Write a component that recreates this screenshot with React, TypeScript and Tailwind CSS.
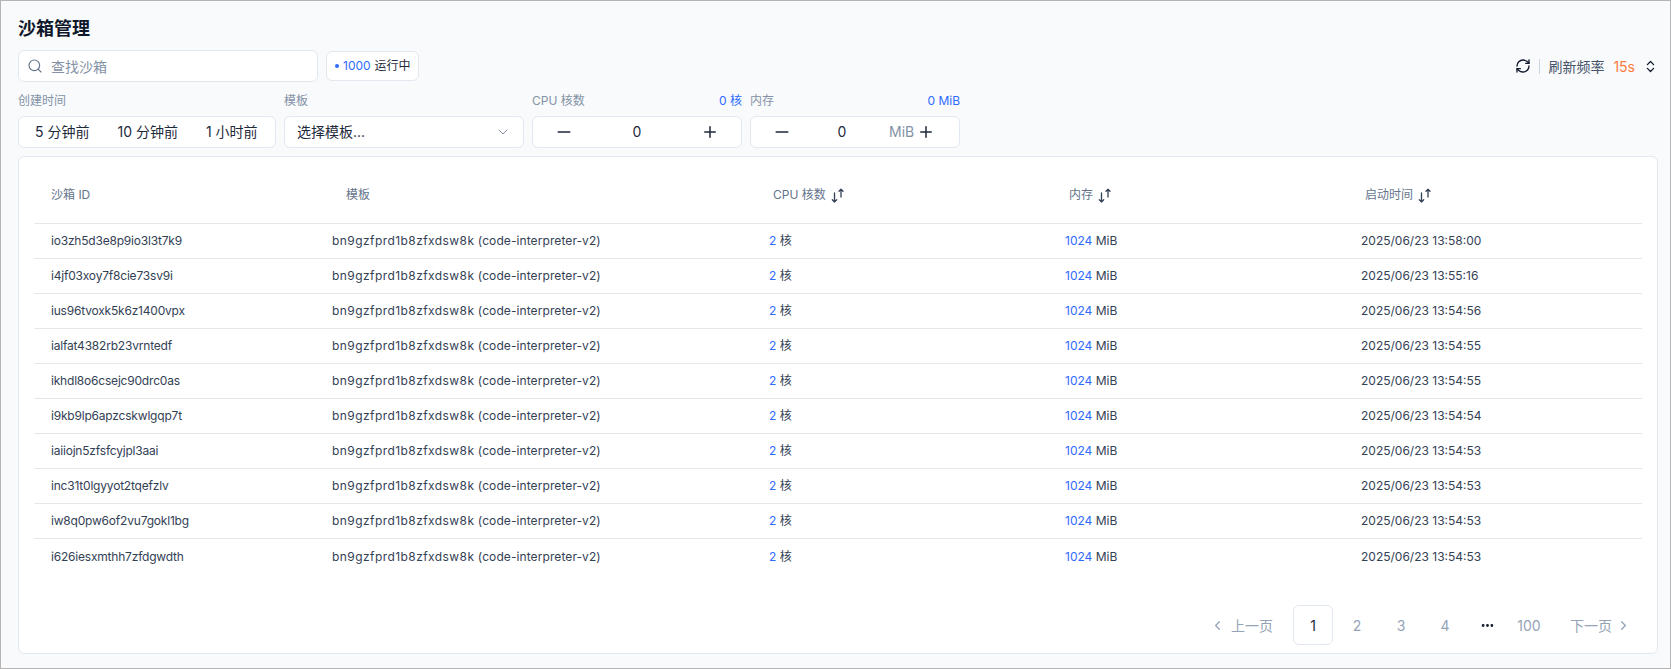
import { Search, ChevronDown, ChevronLeft, ChevronRight, Minus, Plus, RefreshCw, ChevronsUpDown, Ellipsis } from "lucide-react";

const font = "[font-family:Inter,'Noto_Sans_CJK_SC',sans-serif]";

const rows = [
  ["io3zh5d3e8p9io3l3t7k9", "2025/06/23 13:58:00"],
  ["i4jf03xoy7f8cie73sv9i", "2025/06/23 13:55:16"],
  ["ius96tvoxk5k6z1400vpx", "2025/06/23 13:54:56"],
  ["ialfat4382rb23vrntedf", "2025/06/23 13:54:55"],
  ["ikhdl8o6csejc90drc0as", "2025/06/23 13:54:55"],
  ["i9kb9lp6apzcskwlgqp7t", "2025/06/23 13:54:54"],
  ["iaiiojn5zfsfcyjpl3aai", "2025/06/23 13:54:53"],
  ["inc31t0lgyyot2tqefzlv", "2025/06/23 13:54:53"],
  ["iw8q0pw6of2vu7gokl1bg", "2025/06/23 13:54:53"],
  ["i626iesxmthh7zfdgwdth", "2025/06/23 13:54:53"],
];

function Stepper({ unit }: { unit?: string }) {
  return (
    <div className="flex h-[32px] w-[210px] items-center rounded-md border border-[#e2e8f0] bg-white text-[14px] text-[#1e293b]">
      <div className="flex w-[62px] justify-center"><Minus size={20} strokeWidth={1.8} /></div>
      {unit ? (
        <>
          <div className="w-[58px] text-center">0</div>
          <span className="ml-[18px] text-[#8492a6]">{unit}</span>
          <Plus size={18} strokeWidth={2} className="ml-[3px]" />
        </>
      ) : (
        <>
          <div className="w-[84px] text-center">0</div>
          <div className="flex flex-1 justify-center"><Plus size={18} strokeWidth={2} /></div>
        </>
      )}
    </div>
  );
}

function SortIcon() {
  return (
    <svg width="14" height="15" viewBox="0 0 14 15" fill="none" stroke="#334155" strokeWidth="1.3" strokeLinecap="round" strokeLinejoin="round">
      <path d="M3.5 5V14M1.3 11.8l2.2 2.2 2.2-2.2" />
      <path d="M10 9V1.2M8 3.2l2-2 2 2" />
    </svg>
  );
}

function SortHead({ label, className }: { label: string; className: string }) {
  return (
    <div className={`flex items-center gap-[5px] ${className}`}>
      <span>{label}</span>
      <SortIcon />
    </div>
  );
}

export default function App() {
  return (
    <div className={`flex h-[669px] w-[1671px] flex-col border border-[#b4b4b4] bg-[#f8fafc] pl-[17px] pr-[12px] ${font}`}>
      <h1 className="mt-[14px] h-[28px] text-[18px] font-semibold leading-[28px] text-[#0f172a]">沙箱管理</h1>

      <div className="mt-[7px] flex h-[32px] items-center">
        <div className="flex h-[32px] w-[300px] items-center gap-[8px] rounded-md border border-[#e2e8f0] bg-white px-[8px]">
          <Search size={16} strokeWidth={1.75} className="text-[#64748b]" />
          <span className="text-[14px] text-[#8492a6]">查找沙箱</span>
        </div>
        <div className="ml-[8px] flex h-[30px] items-center rounded-md border border-[#e2e8f0] bg-white pl-[8px] pr-[7px] text-[12px]">
          <span className="mr-[4px] h-[4px] w-[4px] rounded-full bg-[#2f6bff]" />
          <span className="text-[#2f6bff]">1000</span>
          <span className="ml-[4px] text-[#1e293b]">运行中</span>
        </div>
        <div className="ml-auto flex items-center text-[14px]">
          <RefreshCw size={16} strokeWidth={2} className="text-[#0f172a]" />
          <span className="mx-[8px] h-[15px] w-px bg-[#cbd5e1]" />
          <span className="text-[#475569]">刷新频率</span>
          <span className="ml-[9px] text-[#ff7a3d]">15s</span>
          <ChevronsUpDown size={15} strokeWidth={2} className="ml-[8px] text-[#0f172a]" />
        </div>
      </div>

      <div className="mt-[11px] flex gap-[8px] text-[12px] leading-[16px] text-[#8492a6]">
        <div className="w-[258px]">
          <div className="mb-[7px] h-[16px]">创建时间</div>
          <div className="flex h-[32px] items-center gap-[28px] rounded-md border border-[#e2e8f0] bg-white pl-[16px] text-[14px] text-[#1e293b]">
            <span>5 分钟前</span>
            <span>10 分钟前</span>
            <span>1 小时前</span>
          </div>
        </div>
        <div className="w-[240px]">
          <div className="mb-[7px] h-[16px]">模板</div>
          <div className="flex h-[32px] items-center justify-between rounded-md border border-[#e2e8f0] bg-white pl-[12px] pr-[12px] text-[14px] text-[#1e293b]">
            <span>选择模板...</span>
            <ChevronDown size={16} strokeWidth={1.5} className="text-[#8492a6]" />
          </div>
        </div>
        <div className="w-[210px]">
          <div className="mb-[7px] flex h-[16px] justify-between">
            <span>CPU 核数</span>
            <span className="text-[#2f6bff]">0 核</span>
          </div>
          <Stepper />
        </div>
        <div className="w-[210px]">
          <div className="mb-[7px] flex h-[16px] justify-between">
            <span>内存</span>
            <span className="text-[#2f6bff]">0 MiB</span>
          </div>
          <Stepper unit="MiB" />
        </div>
      </div>

      <div className="mt-[8px] flex h-[498px] flex-col rounded-md border border-[#e2e8f0] bg-white px-[15px]">
        <div className="flex h-[67px] shrink-0 items-center border-b border-[#e5e7eb] pt-[10px] text-[12px] text-[#64748b]">
          <div className="w-[312px] pl-[17px]">沙箱 ID</div>
          <div className="w-[427px]">模板</div>
          <SortHead label="CPU 核数" className="w-[296px]" />
          <SortHead label="内存" className="w-[296px]" />
          <SortHead label="启动时间" className="flex-1" />
        </div>
        {rows.map(([id, time], i) => (
          <div key={id} className={`flex h-[35px] shrink-0 items-center text-[12px] text-[#334155] ${i < rows.length - 1 ? "border-b border-[#e5e7eb]" : ""}`}>
            <div className="w-[298px] pl-[17px] tracking-[-0.2px]">{id}</div>
            <div className="w-[437px]"><span className="tracking-[0.43px]">bn9gzfprd1b8zfxdsw8k</span> <span className="tracking-[0.09px]">(code-interpreter-v2)</span></div>
            <div className="w-[296px]"><span className="text-[#2f6bff]">2</span> 核</div>
            <div className="w-[296px]"><span className="text-[#2f6bff]">1024</span> MiB</div>
            <div className="flex-1">{time}</div>
          </div>
        ))}
        <div className="mt-auto mb-[8px] flex items-center justify-end pr-[11px] text-[14px] text-[#94a3b8]">
          <div className="flex items-center gap-[6px]"><ChevronLeft size={15} /><span>上一页</span></div>
          <div className="ml-[20px] mr-[2px] flex h-[40px] w-[40px] items-center justify-center rounded-md border border-[#e2e8f0] text-[#1e293b]">1</div>
          <div className="flex h-[40px] w-[44px] items-center justify-center">2</div>
          <div className="flex h-[40px] w-[44px] items-center justify-center">3</div>
          <div className="flex h-[40px] w-[44px] items-center justify-center">4</div>
          <div className="flex h-[40px] w-[40px] items-center justify-center text-[#0f172a]"><Ellipsis size={15} strokeWidth={2.5} /></div>
          <div className="flex h-[40px] w-[44px] items-center justify-center">100</div>
          <div className="ml-[19px] flex items-center gap-[4px]"><span>下一页</span><ChevronRight size={15} /></div>
        </div>
      </div>
    </div>
  );
}
